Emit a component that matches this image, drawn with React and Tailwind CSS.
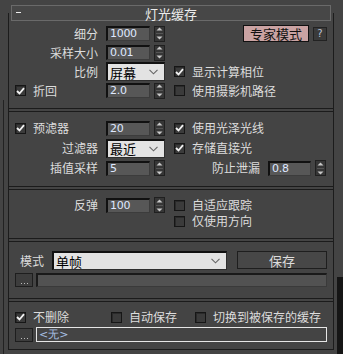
import React from 'react';

const cjk = "font-['Noto_Sans_CJK_SC','Noto_Sans',sans-serif]";

function Check({ on }) {
  return (
    <span className="w-[11px] h-[11px] shrink-0 border border-[#161616] bg-[#3b3b3b] shadow-[inset_1px_1px_0_#2a2a2a] flex items-center justify-center">
      {on && (
        <svg width="9" height="8" viewBox="0 0 9 8">
          <path d="M1 4 L3.5 6.5 L8 1.2" stroke="#f2f2f2" strokeWidth="1.8" fill="none" />
        </svg>
      )}
    </span>
  );
}

function Arrows() {
  return (
    <span className="w-[11px] h-[16px] shrink-0 bg-[#363636] border border-[#202020] flex flex-col items-center justify-center gap-[2px]">
      <svg width="7" height="4" viewBox="0 0 7 4"><path d="M0.5 3.5 L3.5 0.5 L6.5 3.5 Z" fill="#c8c8c8" /></svg>
      <span className="w-[7px] h-px bg-[#555]" />
      <svg width="7" height="4" viewBox="0 0 7 4"><path d="M0.5 0.5 L3.5 3.5 L6.5 0.5 Z" fill="#c8c8c8" /></svg>
    </span>
  );
}

function Spin({ value, width = 'w-[44px]' }) {
  return (
    <div className="flex items-center gap-[4px]">
      <div className={`${width} h-[15px] bg-[#575757] border-t-2 border-l-2 border-t-[#111] border-l-[#111] border-r border-b border-r-[#3c3c3c] border-b-[#3c3c3c] pl-[2px] text-[11px] leading-[12px] text-[#dfe8ff] font-['DejaVu_Sans',sans-serif] tracking-[-0.3px]`}>
        {value}
      </div>
      <Arrows />
    </div>
  );
}

function Drop({ value, width }) {
  return (
    <div className={`${width} h-[19px] bg-[#e3e3e3] border-t-2 border-l-2 border-t-[#111] border-l-[#111] border-r border-b border-r-[#2e2e2e] border-b-[#2e2e2e] flex items-center justify-between pl-[2px] pr-[6px]`}>
      <span className="text-[13px] leading-none text-black">{value}</span>
      <svg width="9" height="6" viewBox="0 0 9 6"><path d="M0.5 0.8 L4.5 4.8 L8.5 0.8" stroke="#666" strokeWidth="1.1" fill="none" /></svg>
    </div>
  );
}

function Sep() {
  return <div className="h-[4px] border-t border-b border-[#1b1b1b]" />;
}

function Label({ children }) {
  return <div className="w-[89px] text-right pr-0 mr-[8px]">{children}</div>;
}

function CheckLabel({ on, children, className = '' }) {
  return (
    <div className={`flex items-center gap-[7px] ${className}`}>
      <Check on={on} />
      <span>{children}</span>
    </div>
  );
}

function Dots() {
  return (
    <div className="w-[18px] h-[14px] bg-[#3d3d3d] border border-[#1e1e1e] flex items-end justify-center pb-[2px] gap-[2px]">
      <span className="w-px h-px bg-[#bbb]" />
      <span className="w-px h-px bg-[#bbb]" />
      <span className="w-px h-px bg-[#bbb]" />
    </div>
  );
}

export default function App() {
  return (
    <div className={`w-[343px] h-[354px] bg-[#444444] overflow-hidden flex text-[12px] leading-none text-[#dcdcdc] ${cjk}`}>
      <div className="w-[3px]" />
      <div className="w-px mt-[100px] h-[254px] bg-[#222]" />
      <div className="w-[4px]" />
      {/* rollout frame */}
      <div className="mt-[13px] w-[326px] h-[337px] border-l border-r border-b border-[#1c1c1c] flex flex-col">
        {/* title */}
        <div className="mt-[-8px] ml-[2px] w-[320px] h-[16px] border border-[#6a6a6a] bg-[#474747] relative flex items-center justify-center text-[13px] text-[#ececec]">
          <span className="absolute left-[4px] top-[6px] w-[5px] h-px bg-[#eee]" />
          灯光缓存
        </div>

        {/* section 1 */}
        <div className="mt-[3px] flex">
          <div className="w-[165px] flex flex-col">
            <div className="h-[19px] flex items-center"><Label>细分</Label><Spin value="1000" /></div>
            <div className="h-[19px] flex items-center"><Label>采样大小</Label><Spin value="0.01" /></div>
            <div className="h-[19px] flex items-center"><Label>比例</Label><Drop value="屏幕" width="w-[59px]" /></div>
            <div className="h-[19px] flex items-center">
              <div className="w-[97px] pl-[6px]"><CheckLabel on>折回</CheckLabel></div>
              <Spin value="2.0" />
            </div>
          </div>
          <div className="flex-1 flex flex-col">
            <div className="h-[19px] flex items-center">
              <div className="ml-[69px] w-[66px] h-[17px] bg-[#caa3a3] border border-[#111] flex items-center justify-center text-[13px] text-[#111]">专家模式</div>
              <div className="ml-[4px] w-[14px] h-[14px] bg-[#3a3a3a] border border-[#222] flex items-center justify-center text-[10px] text-[#b9c3d6] font-['DejaVu_Sans',sans-serif]">?</div>
            </div>
            <div className="h-[19px]" />
            <div className="h-[19px] flex items-center"><CheckLabel on>显示计算相位</CheckLabel></div>
            <div className="h-[19px] flex items-center"><CheckLabel>使用摄影机路径</CheckLabel></div>
          </div>
        </div>
        <div className="mt-[8px]"><Sep /></div>

        {/* section 2 */}
        <div className="mt-[6px] flex">
          <div className="w-[165px] flex flex-col">
            <div className="h-[20px] flex items-center">
              <div className="w-[97px] pl-[6px]"><CheckLabel on>预滤器</CheckLabel></div>
              <Spin value="20" />
            </div>
            <div className="h-[20px] flex items-center"><Label>过滤器</Label><Drop value="最近" width="w-[59px]" /></div>
            <div className="h-[20px] flex items-center"><Label>插值采样</Label><Spin value="5" /></div>
          </div>
          <div className="flex-1 flex flex-col">
            <div className="h-[20px] flex items-center"><CheckLabel on>使用光泽光线</CheckLabel></div>
            <div className="h-[20px] flex items-center"><CheckLabel on>存储直接光</CheckLabel></div>
            <div className="h-[20px] flex items-center">
              <div className="w-[86px] text-right mr-[8px]">防止泄漏</div>
              <div className="flex items-center gap-[5px]">
                <Spin value="0.8" width="w-[43px]" />
              </div>
            </div>
          </div>
        </div>
        <div className="mt-[8px]"><Sep /></div>

        {/* section 3 */}
        <div className="mt-[7px] flex">
          <div className="w-[165px] flex flex-col">
            <div className="h-[16px] flex items-center"><Label>反弹</Label><Spin value="100" /></div>
          </div>
          <div className="flex-1 flex flex-col">
            <div className="h-[16px] flex items-center"><CheckLabel>自适应跟踪</CheckLabel></div>
            <div className="h-[16px] flex items-center"><CheckLabel>仅使用方向</CheckLabel></div>
          </div>
        </div>
        <div className="mt-[9px]"><Sep /></div>

        {/* section 4 */}
        <div className="mt-[9px] flex items-start">
          <div className="h-[20px] flex items-center pl-[11px] w-[43px]">模式</div>
          <Drop value="单帧" width="w-[175px]" />
          <div className="ml-[10px] w-[90px] h-[18px] bg-[#474747] border border-[#1e1e1e] flex items-center justify-center text-[13px]">保存</div>
        </div>
        <div className="mt-[2px] flex items-center pl-[6px] gap-[3px]">
          <Dots />
          <div className="w-[291px] h-[14px] bg-[#525252] border-t-2 border-l-2 border-[#1a1a1a] border-r border-b border-r-[#3a3a3a] border-b-[#3a3a3a]" />
        </div>
        <div className="mt-[11px]"><Sep /></div>

        {/* section 5 */}
        <div className="mt-[8px] h-[14px] flex items-center pl-[6px]">
          <CheckLabel on className="w-[96px]">不删除</CheckLabel>
          <CheckLabel className="w-[84px]">自动保存</CheckLabel>
          <CheckLabel>切换到被保存的缓存</CheckLabel>
        </div>
        <div className="mt-[3px] flex items-center pl-[6px] gap-[3px]">
          <Dots />
          <div className="w-[291px] h-[15px] border border-[#e6e6e6] bg-[#444] flex items-center pl-[2px] text-[11px] text-[#a9c0e4] font-['DejaVu_Sans',sans-serif]">&lt;无&gt;</div>
        </div>
      </div>
      <div className="w-[3px]" />
      <div className="w-[6px] mt-[277px] bg-[#151515]" />
    </div>
  );
}
